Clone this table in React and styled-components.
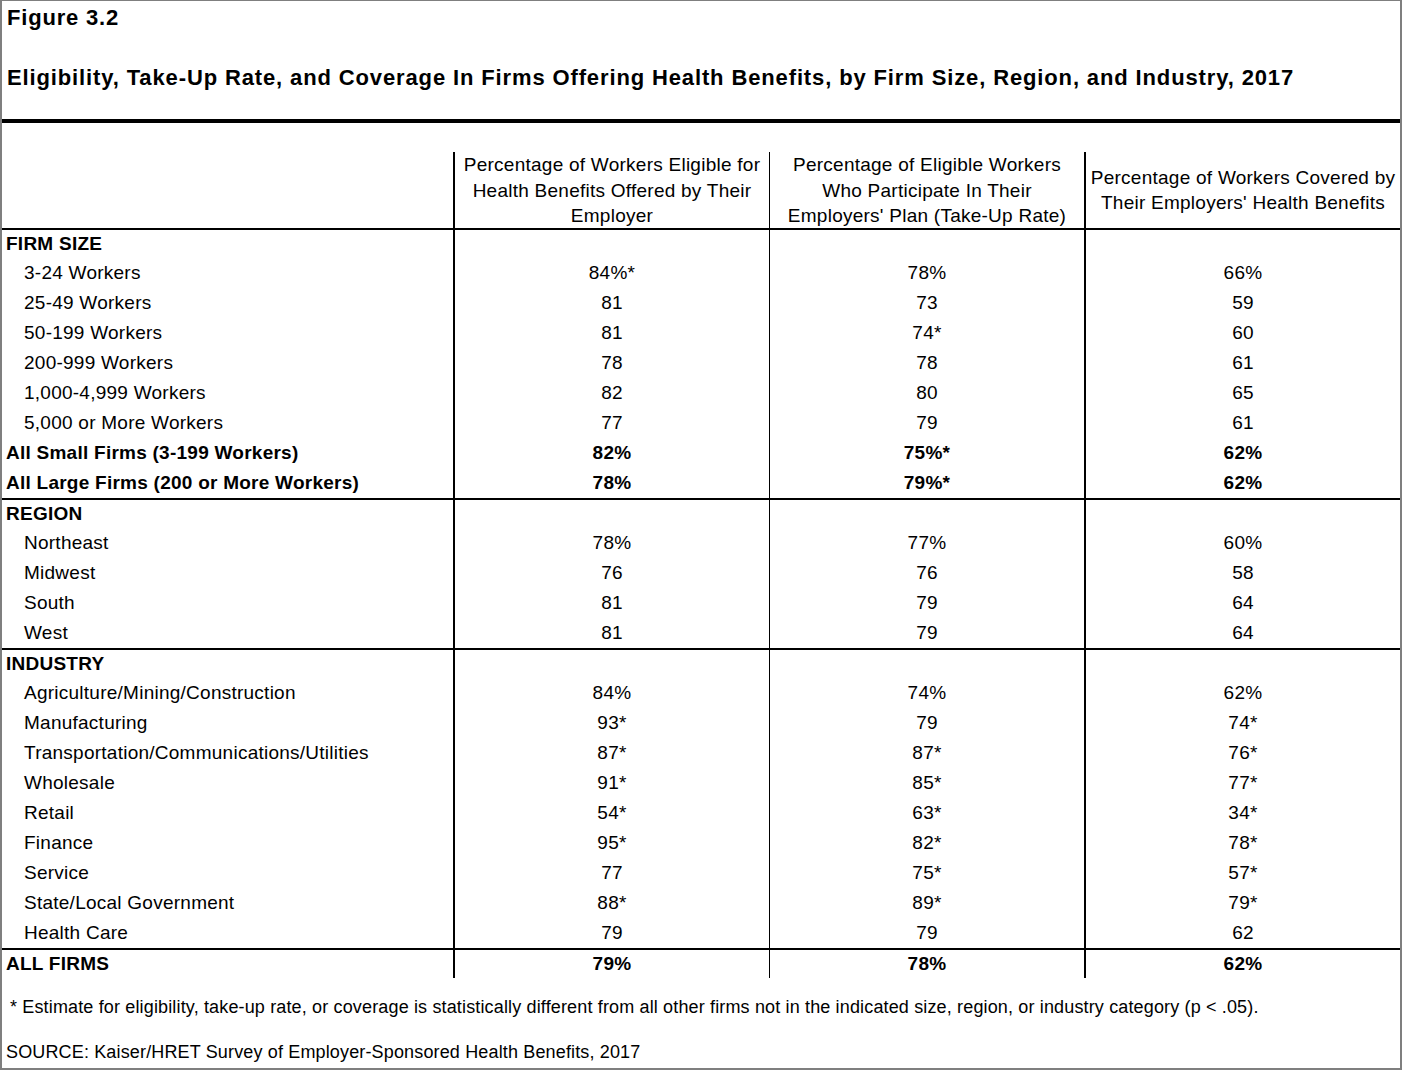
import React from "react";
import styled, { createGlobalStyle } from "styled-components";

const Global = createGlobalStyle`
  html, body { margin: 0; padding: 0; background: #fff; }
  * { box-sizing: border-box; }
`;

const Frame = styled.div`
  width: 1402px;
  height: 1070px;
  border: 1px solid #7f7f7f;
  border-left-width: 2px;
  border-right-width: 2px;
  border-bottom-width: 2px;
  font-family: "Liberation Sans", Arial, sans-serif;
  color: #000;
  display: flex;
  flex-direction: column;
`;

const Title = styled.div`
  font-weight: bold;
  font-size: 22px;
  letter-spacing: 0.8px;
  line-height: 34px;
  padding-left: 5px;
`;

const Subtitle = styled(Title)`
  margin-top: 26px;
  letter-spacing: 0.87px;
`;

const Rule = styled.div`
  height: 4px;
  background: #000;
  margin-top: 24px;
`;

const Table = styled.div`
  margin-top: 29px;
  display: flex;
  flex-direction: column;
`;

const Row = styled.div`
  display: grid;
  grid-template-columns: 451px 316px 315px 1fr;
  height: ${(p) => (p.$header ? "76px" : "30px")};
  border-top: ${(p) => (p.$ruled ? "2px solid #000" : "none")};
  font-size: 19px;
  letter-spacing: 0.25px;
  font-weight: ${(p) => (p.$bold ? "bold" : "normal")};
`;

const Label = styled.div`
  display: flex;
  align-items: center;
  padding-left: ${(p) => (p.$indent ? "22px" : "4px")};
  white-space: nowrap;
`;

const Cell = styled.div`
  display: flex;
  align-items: center;
  justify-content: center;
  text-align: center;
  border-left: ${(p) => p.$line}px solid #000;
  line-height: 25.5px;
  white-space: nowrap;
`;

const Notes = styled.div`
  display: flex;
  flex-direction: column;
  font-size: 18px;
  letter-spacing: 0.15px;
`;

const Note = styled.div`
  line-height: 22px;
  padding-left: ${(p) => p.$pad}px;
  margin-top: ${(p) => p.$mt}px;
  white-space: nowrap;
`;

const LINES = [2, 1, 2];

const sections = [
  {
    title: "FIRM SIZE",
    rows: [
      ["3-24 Workers", "84%*", "78%", "66%"],
      ["25-49 Workers", "81", "73", "59"],
      ["50-199 Workers", "81", "74*", "60"],
      ["200-999 Workers", "78", "78", "61"],
      ["1,000-4,999 Workers", "82", "80", "65"],
      ["5,000 or More Workers", "77", "79", "61"],
    ],
    totals: [
      ["All Small Firms (3-199 Workers)", "82%", "75%*", "62%"],
      ["All Large Firms (200 or More Workers)", "78%", "79%*", "62%"],
    ],
  },
  {
    title: "REGION",
    rows: [
      ["Northeast", "78%", "77%", "60%"],
      ["Midwest", "76", "76", "58"],
      ["South", "81", "79", "64"],
      ["West", "81", "79", "64"],
    ],
    totals: [],
  },
  {
    title: "INDUSTRY",
    rows: [
      ["Agriculture/Mining/Construction", "84%", "74%", "62%"],
      ["Manufacturing", "93*", "79", "74*"],
      ["Transportation/Communications/Utilities", "87*", "87*", "76*"],
      ["Wholesale", "91*", "85*", "77*"],
      ["Retail", "54*", "63*", "34*"],
      ["Finance", "95*", "82*", "78*"],
      ["Service", "77", "75*", "57*"],
      ["State/Local Government", "88*", "89*", "79*"],
      ["Health Care", "79", "79", "62"],
    ],
    totals: [],
  },
];

function DataRow({ data, indent, bold, ruled }) {
  return (
    <Row $bold={bold} $ruled={ruled}>
      <Label $indent={indent}>{data[0]}</Label>
      {data.slice(1).map((v, i) => (
        <Cell key={i} $line={LINES[i]}>
          {v}
        </Cell>
      ))}
    </Row>
  );
}

export default function App() {
  return (
    <>
      <Global />
      <Frame>
        <Title>Figure 3.2</Title>
        <Subtitle>
          Eligibility, Take-Up Rate, and Coverage In Firms Offering Health
          Benefits, by Firm Size, Region, and Industry, 2017
        </Subtitle>
        <Rule />
        <Table>
          <Row $header>
            <Label />
            <Cell $line={2}>
              Percentage of Workers Eligible for
              <br />
              Health Benefits Offered by Their
              <br />
              Employer
            </Cell>
            <Cell $line={1}>
              Percentage of Eligible Workers
              <br />
              Who Participate In Their
              <br />
              Employers' Plan (Take-Up Rate)
            </Cell>
            <Cell $line={2}>
              Percentage of Workers Covered by
              <br />
              Their Employers' Health Benefits
            </Cell>
          </Row>
          {sections.map((s) => (
            <React.Fragment key={s.title}>
              <DataRow data={[s.title, "", "", ""]} bold ruled />
              {s.rows.map((r) => (
                <DataRow key={r[0]} data={r} indent />
              ))}
              {s.totals.map((r) => (
                <DataRow key={r[0]} data={r} bold />
              ))}
            </React.Fragment>
          ))}
          <DataRow data={["ALL FIRMS", "79%", "78%", "62%"]} bold ruled />
        </Table>
        <Notes>
          <Note $pad={8} $mt={18}>
            * Estimate for eligibility, take-up rate, or coverage is statistically
            different from all other firms not in the indicated size, region, or
            industry category (p &lt; .05).
          </Note>
          <Note $pad={4} $mt={23}>
            SOURCE: Kaiser/HRET Survey of Employer-Sponsored Health Benefits, 2017
          </Note>
        </Notes>
      </Frame>
    </>
  );
}
